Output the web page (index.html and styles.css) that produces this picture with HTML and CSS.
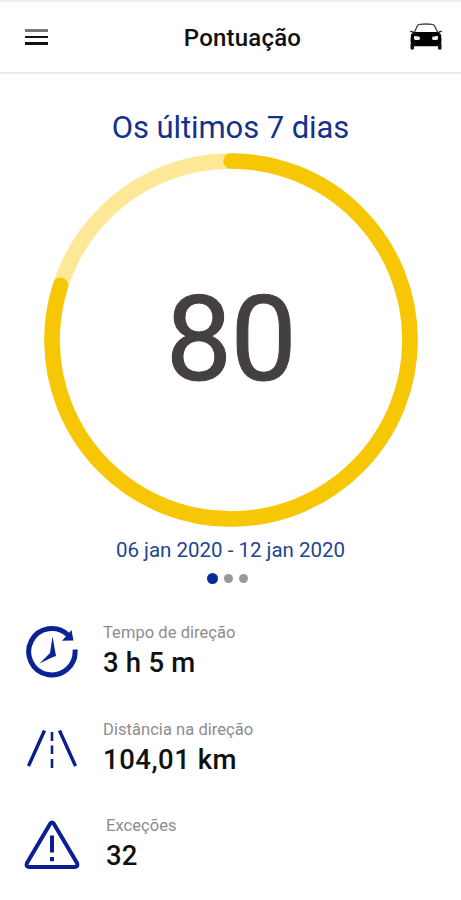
FILE: index.html
```html
<!DOCTYPE html>
<html lang="pt-BR">
<head>
    <meta charset="UTF-8">
    <meta name="viewport" content="width=device-width, initial-scale=1.0">
    <title>Pontuação</title>
    <link rel="stylesheet" href="styles.css">
</head>
<body>

    <header class="top-bar">
        <button class="menu-button" aria-label="Menu">
            <span class="menu-line light"></span>
            <span class="menu-line"></span>
            <span class="menu-line"></span>
        </button>
        <h1>Pontuação</h1>
        <button class="car-button" aria-label="Veículo">
            <svg width="34" height="28" viewBox="0 0 34 28">
                <path d="M5 10 L8.5 2.8 Q9 1.6 11 1.4 Q17 0.6 23 1.4 Q25 1.6 25.5 2.8 L29 10" fill="#fff" stroke="#444" stroke-width="1.4"/>
                <path d="M0.3 8 Q2.5 7 4.8 8.8 L4 10.3 Z M33.7 8 Q31.5 7 29.2 8.8 L30 10.3 Z" fill="#222"/>
                <path d="M5 9 H29 L32 11.5 Q33 17 32 22 L30 23.3 H4 L2 22 Q1 17 2 11.5 Z" fill="#000"/>
                <path d="M1.5 21 H5 V26 Q3.2 27.5 1.5 26 Z M29 21 H32.5 V26 Q30.8 27.5 29 26 Z" fill="#111"/>
                <path d="M5 13 L10 13.6 Q12 15.5 10 17 H6 Q4.5 16 5 13 Z M29 13 L24 13.6 Q22 15.5 24 17 H28 Q29.5 16 29 13 Z" fill="#eee"/>
            </svg>
        </button>
    </header>

    <main>
        <section class="score">
            <h2>Os últimos 7 dias</h2>
            <div class="ring">
                <svg width="376" height="376" viewBox="0 0 376 376">
                    <circle class="ring-track" cx="188" cy="188" r="179"/>
                    <circle class="ring-value" cx="188" cy="188" r="179" pathLength="100" stroke-dasharray="79.95 100" transform="rotate(-90 188 188)"/>
                </svg>
                <span class="ring-number">80</span>
            </div>
            <p class="period">06 jan 2020 - 12 jan 2020</p>
            <div class="dots">
                <span class="dot active"></span>
                <span class="dot"></span>
                <span class="dot"></span>
            </div>
        </section>

        <ul class="stats">
            <li class="stat">
                <!-- relógio -->
                <svg class="stat-icon" width="56" height="56" viewBox="0 0 56 56">
                    <path d="M44 11 A23.2 23.2 0 1 0 51 25.5" fill="none" stroke="#0a2394" stroke-width="5"/>
                    <path d="M47.5 6 L49.5 16.5 L38 16.8 Z" fill="#0a2394"/>
                    <path d="M28.5 12.5 L32 32 L28 33.5 L15.5 39.5 L26 29 Z" fill="#0a2394"/>
                </svg>
                <div class="stat-text">
                    <span class="stat-label">Tempo de direção</span>
                    <span class="stat-value">3 h 5 m</span>
                </div>
            </li>
            <li class="stat">
                <!-- estrada -->
                <svg class="stat-icon" width="56" height="56" viewBox="0 0 56 56">
                    <path d="M20.5 9.5 L4.5 45 M35.5 9.5 L51.5 45" fill="none" stroke="#0a1f8c" stroke-width="3.4"/>
                    <path d="M28 11 V20 M28 24.5 V33 M28 38 V47" fill="none" stroke="#0a1f8c" stroke-width="2.6"/>
                </svg>
                <div class="stat-text">
                    <span class="stat-label">Distância na direção</span>
                    <span class="stat-value wide">104,01 km</span>
                </div>
            </li>
            <li class="stat">
                <!-- alerta -->
                <svg class="stat-icon" width="56" height="56" viewBox="0 0 56 56">
                    <path d="M26 7 Q28 4.2 30 7 L53 46 Q54.5 50 50.5 50 H5.5 Q1.5 50 3 46 Z" fill="none" stroke="#0a1f94" stroke-width="4" stroke-linejoin="round"/>
                    <path d="M28 18.5 V35.5 M28 40 V44.3" fill="none" stroke="#0a1f94" stroke-width="4"/>
                </svg>
                <div class="stat-text indent">
                    <span class="stat-label">Exceções</span>
                    <span class="stat-value">32</span>
                </div>
            </li>
        </ul>
    </main>

</body>
</html>
```

FILE: styles.css
```css
* {
    box-sizing: border-box;
}
body {
    margin: 0;
    height: 900px;
    overflow: hidden;
    background-color: #fff;
    font-family: Roboto, "Liberation Sans", sans-serif;
    color: #111;
}
h1, h2, p, ul {
    margin: 0;
    padding: 0;
    font-weight: 400;
}
button {
    padding: 0;
    border: none;
    background: none;
    cursor: pointer;
}
.top-bar {
    display: flex;
    justify-content: space-between;
    align-items: center;
    height: 74px;
    padding: 2px 18px 2px 25px;
    border-top: 2px solid #eee;
    border-bottom: 2px solid #e9e9e9;
}
.menu-button {
    display: flex;
    flex-direction: column;
    gap: 4px;
    width: 51px;
    margin-top: -1px;
}
.menu-line {
    width: 23px;
    height: 2.5px;
    background-color: #111;
}
.menu-line.light {
    height: 3px;
    background-color: #777;
}
h1 {
    margin-top: 2px;
    font-size: 24px;
    font-weight: 500;
    letter-spacing: 0.2px;
}
.car-button svg {
    display: block;
}
.score {
    display: flex;
    flex-direction: column;
    align-items: center;
}
h2 {
    margin-top: 33px;
    height: 45px;
    line-height: 41px;
    font-size: 31px;
    letter-spacing: -0.08px;
    color: #14318c;
}
.ring {
    display: grid;
    place-items: center;
}
.ring > * {
    grid-area: 1 / 1;
}
.ring svg {
    display: block;
}
.ring circle {
    fill: none;
    stroke-width: 15.5;
}
.ring-track {
    stroke: #fde897;
}
.ring-value {
    stroke: #f7c605;
    stroke-linecap: round;
}
.ring-number {
    font-size: 118px;
    line-height: 120px;
    letter-spacing: -1.5px;
    -webkit-text-stroke: 1px #454040;
    color: #454040;
}
.period {
    margin-top: 9px;
    line-height: 26px;
    font-size: 20.5px;
    color: #24458f;
}
.dots {
    display: flex;
    align-items: center;
    gap: 6px;
    margin-top: 10px;
    margin-right: 6px;
    height: 11px;
}
.dot {
    width: 9px;
    height: 9px;
    border-radius: 50%;
    background-color: #999;
}
.dot.active {
    width: 11px;
    height: 11px;
    background-color: #0a2a96;
}
.stats {
    display: flex;
    flex-direction: column;
    gap: 40.5px;
    padding: 40px 24px 0;
    list-style: none;
}
.stat {
    display: flex;
    gap: 23px;
    height: 56px;
}
.stat-text {
    display: flex;
    flex-direction: column;
    margin-top: -1px;
}
.stat-text.indent {
    padding-left: 3px;
}
.stat-label {
    line-height: 20px;
    font-size: 16.5px;
    letter-spacing: 0.05px;
    color: #8c8c8c;
}
.stat-value {
    line-height: 34px;
    font-size: 27.5px;
    font-weight: 500;
    letter-spacing: 0.2px;
    margin-top: 3px;
}
.stat-value.wide {
    letter-spacing: 0.5px;
}
```
